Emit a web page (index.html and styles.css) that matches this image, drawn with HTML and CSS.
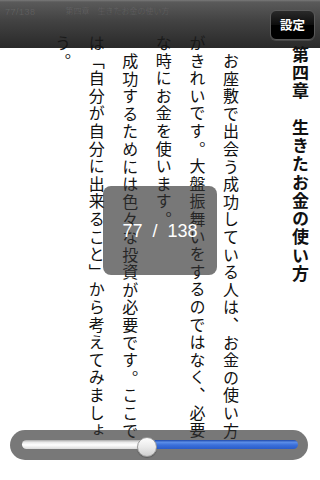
FILE: index.html
```html
<!DOCTYPE html>
<html lang="ja">
<head>
<meta charset="utf-8">
<title>Reader</title>
<link rel="stylesheet" href="styles.css">
</head>
<body>
<div class="page">
  <article class="reader">
    <h1 class="chapter">第四章　生きたお金の使い方</h1>
    <p class="para">お座敷で出会う成功している人は、お金の使い方がきれいです。大盤振舞いをするのではなく、必要な時にお金を使います。</p>
    <p class="para">成功するためには色々な投資が必要です。ここでは「自分が自分に出来ること」から考えてみましょう。</p>
  </article>

  <header class="topbar">
    <span class="meta">77/138</span>
    <span class="meta-title">第四章　生きたお金の使い方</span>
    <button class="settings">設定</button>
  </header>

  <div class="page-indicator">77 / 138</div>

  <div class="slider">
    <div class="track-min" style="width:120px"></div>
    <div class="thumb"></div>
    <div class="track-max"></div>
  </div>
</div>
</body>
</html>
```

FILE: styles.css
```css
html, body {
  margin: 0;
  padding: 0;
  background: #fff;
}

.page {
  position: relative;
  width: 320px;
  height: 480px;
  overflow: hidden;
  background: #fff;
  font-family: "Noto Sans CJK JP", "Noto Sans", sans-serif;
}

.reader {
  writing-mode: vertical-rl;
  text-orientation: mixed;
  box-sizing: border-box;
  width: 320px;
  height: 480px;
  padding: 35px 3px 35px 0;
  color: #111;
  text-spacing-trim: space-all;
}

.chapter {
  margin: 0;
  margin-block-end: 36px;
  padding-inline-start: 11px;
  font-size: 17px;
  font-weight: 700;
  letter-spacing: 1.25px;
  line-height: 34px;
}

.para {
  margin: 0;
  font-size: 16px;
  font-weight: 400;
  letter-spacing: 1.6px;
  line-height: 33.6px;
  text-indent: 17.6px;
}

.topbar {
  position: absolute;
  top: 0;
  left: 0;
  right: 0;
  height: 48px;
  box-sizing: border-box;
  display: flex;
  align-items: flex-start;
  padding: 10px 5px 0 5px;
  background: linear-gradient(to bottom,
    rgba(110,110,110,0.92) 0,
    rgba(72,72,72,0.9) 2px,
    rgba(45,45,45,0.9) 45%,
    rgba(18,18,18,0.9) 100%);
  font-family: "Liberation Sans", "Noto Sans CJK JP", sans-serif;
}

.meta {
  margin-top: -3px;
  font-size: 9px;
  line-height: 10px;
  color: rgba(255,255,255,0.1);
  letter-spacing: 0.5px;
}

.meta-title {
  margin-top: -3px;
  margin-left: 30px;
  font-size: 8px;
  line-height: 10px;
  color: rgba(255,255,255,0.09);
}

.settings {
  margin-left: auto;
  width: 45px;
  height: 30px;
  padding: 0;
  border: 1px solid #5a5a5a;
  border-radius: 6px;
  background: linear-gradient(to bottom, #2a2a2a 0, #0c0c0c 50%, #000 51%, #000 100%);
  box-shadow: 0 1px 0 rgba(255,255,255,0.12);
  color: #fff;
  font-family: "Noto Sans CJK JP", sans-serif;
  font-size: 12.5px;
  font-weight: 700;
  line-height: 28px;
}

.page-indicator {
  position: absolute;
  left: 103px;
  top: 186px;
  width: 114px;
  height: 89px;
  border-radius: 8px;
  background: rgba(50,50,50,0.66);
  display: flex;
  align-items: center;
  justify-content: center;
  color: #fff;
  font-family: "Liberation Sans", Arial, sans-serif;
  font-size: 18px;
  word-spacing: 5px;
  padding-top: 2px;
  box-sizing: border-box;
}

.slider {
  position: absolute;
  left: 10px;
  top: 430px;
  width: 298px;
  height: 30px;
  box-sizing: border-box;
  border-radius: 15px;
  background: rgba(50,50,50,0.66);
  display: flex;
  align-items: center;
  padding: 0 10px 0 12px;
}

.track-min {
  flex: none;
  height: 9px;
  border-radius: 5px 0 0 5px;
  background: linear-gradient(to bottom, #a9a9a9 0, #e8e8e8 25%, #ffffff 55%, #d9d9d9 100%);
  margin-top: -1px;
}

.thumb {
  position: relative;
  z-index: 1;
  flex: none;
  width: 20px;
  height: 20px;
  margin: 3px -5px 0 -5px;
  border-radius: 50%;
  box-sizing: border-box;
  border: 1px solid #9a9a9a;
  background: linear-gradient(to bottom, #fdfdfd 0, #eaeaea 50%, #cfcfcf 100%);
  box-shadow: 0 1px 1px rgba(0,0,0,0.25);
}

.track-max {
  flex: 1;
  height: 9px;
  border-radius: 0 5px 5px 0;
  background: linear-gradient(to bottom, #1d47a8 0, #5c8ee8 25%, #3b70da 55%, #2a5cc9 100%);
  margin-top: -1px;
}
```
